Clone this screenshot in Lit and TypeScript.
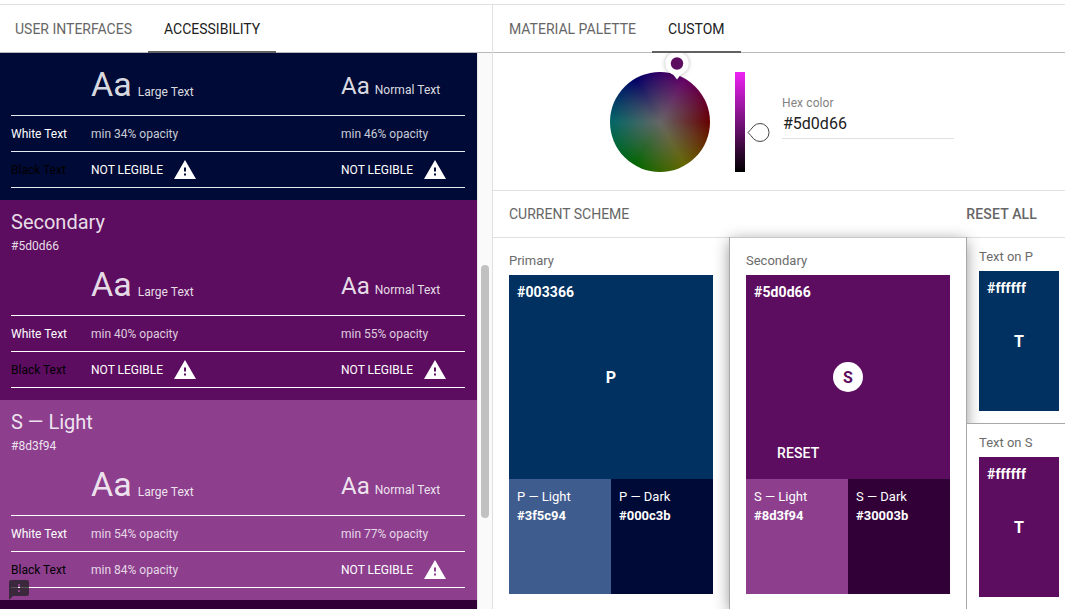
import { LitElement, html, css, svg, nothing } from "lit";
import { customElement, property } from "lit/decorators.js";

interface Report {
  name: string;
  hex: string;
  bg: string;
  white: [string, string];
  black: [string, string];
  clipped?: boolean;
}

const REPORTS: Report[] = [
  { name: "", hex: "", bg: "#000a36", white: ["34", "46"], black: ["", ""], clipped: true },
  { name: "Secondary", hex: "#5d0d66", bg: "#5d0d60", white: ["40", "55"], black: ["", ""] },
  { name: "S — Light", hex: "#8d3f94", bg: "#8d3f8e", white: ["54", "77"], black: ["84", ""] },
];

const warning = svg`<svg class="warn" width="22" height="19" viewBox="0 0 22 19">
  <path fill="#fff" fill-rule="evenodd" d="M11 0 22 19H0ZM10 7.6v4h2v-4ZM10 13.6v2h2v-2Z"/></svg>`;

@customElement("contrast-report")
class ContrastReport extends LitElement {
  @property({ attribute: false }) report!: Report;

  static styles = css`
    :host { display: block; flex: none; }
    .box { height: 200px; box-sizing: border-box; padding: 0 12px 0 11px; color: rgba(255, 255, 255, 0.87); font-size: 12px; }
    .clipped { height: 147px; }
    .head { height: 62px; box-sizing: border-box; padding-top: 10px; }
    .clipped .head { height: 9px; padding: 0; }
    .name { font-size: 20px; line-height: 24px; }
    .hex { line-height: 14px; margin-top: 5px; }
    .row { display: grid; grid-template-columns: 80px 250px 1fr; height: 35px; align-items: center; border-bottom: 1px solid #fff; color: rgba(255, 255, 255, 0.8); }
    .clipped .row { border-color: #e8eaf2; }
    .samples { height: 53px; align-items: start; color: rgba(255, 255, 255, 0.87); }
    .samples .label { margin-left: 6px; letter-spacing: 0.05px; }
    .large, .normal { display: flex; align-items: baseline; }
    .big { font-size: 34px; line-height: 45px; }
    .mid { font-size: 24px; line-height: 28px; }
    .normal { padding-top: 10px; }
    .normal .label { margin-left: 5px; }
    .white { color: #fff; }
    .black { color: #000; }
    .fail { display: flex; align-items: center; color: #fff; }
    .warn { margin-left: 11px; }
  `;

  private cell(value: string) {
    return value ? html`<span>min ${value}% opacity</span>` : html`<span class="fail">NOT LEGIBLE ${warning}</span>`;
  }

  render() {
    const r = this.report;
    return html`<div class="box ${r.clipped ? "clipped" : ""}" style="background:${r.bg}">
      <div class="head">${r.name ? html`<div class="name">${r.name}</div><div class="hex">${r.hex}</div>` : nothing}</div>
      <div class="row samples">
        <span></span>
        <span class="large"><span class="big">Aa</span><span class="label">Large Text</span></span>
        <span class="normal"><span class="mid">Aa</span><span class="label">Normal Text</span></span>
      </div>
      <div class="row"><span class="white">White Text</span>${this.cell(r.white[0])}${this.cell(r.white[1])}</div>
      <div class="row"><span class="black">Black Text</span>${this.cell(r.black[0])}${this.cell(r.black[1])}</div>
    </div>`;
  }
}

@customElement("color-picker")
class ColorPicker extends LitElement {
  static styles = css`
    :host { display: block; height: 137px; border-bottom: 1px solid #e0e0e0; overflow: hidden; }
    .picker { display: flex; padding: 19px 0 0 117px; }
    .wheel { position: relative; width: 100px; height: 100px; border-radius: 50%;
      background: radial-gradient(circle closest-side, #666, rgba(102, 102, 102, 0)), conic-gradient(from 90deg, #600, #660, #060, #066, #006, #606, #600); }
    .pin { position: absolute; left: 50px; top: -25px; filter: drop-shadow(0 0 2px rgba(0, 0, 0, 0.28)); }
    .value { position: relative; width: 10px; height: 100px; margin-left: 25px; background: linear-gradient(#ee22f5, #000); }
    .handle { position: absolute; left: 12px; top: 50px; }
    .field { margin: 23px 0 0 37px; width: 172px; height: 43px; border-bottom: 1px solid #e0e0e0; }
    .label { font-size: 12px; line-height: 16px; letter-spacing: 0.1px; color: #828282; }
    .hex { font-size: 16px; line-height: 20px; padding: 3px 0 0 1px; color: #212121; }
  `;

  render() {
    return html`<div class="picker">
      <div class="wheel">
        <svg class="pin" width="34" height="36" viewBox="0 0 34 36">
          <path fill="#fff" d="M17 32.5 13.5 28C8.5 25.4 5.2 21.5 5.2 16.5a11.8 11.8 0 0 1 23.6 0c0 5-3.300 8.900-8.300 11.500Z"/>
          <circle cx="17" cy="16.500" r="6.200" fill="#5d0d60"/>
        </svg>
      </div>
      <div class="value">
        <svg class="handle" width="24" height="22" viewBox="0 0 24 22">
          <path fill="#fff" stroke="#444" d="M1 10.500C3 8.500 4.800 6.300 6.600 4.200A9 9 0 1 1 6.600 16.800C4.800 14.700 3 12.500 1 10.500Z"/>
        </svg>
      </div>
      <div class="field"><div class="label">Hex color</div><div class="hex">#5d0d66</div></div>
    </div>`;
  }
}

@customElement("scheme-card")
class SchemeCard extends LitElement {
  @property() label = "";
  @property() letter = "";
  @property() hex = "";
  @property() main = "";
  @property() lightHex = "";
  @property() light = "";
  @property() darkHex = "";
  @property() dark = "";
  @property({ type: Boolean }) active = false;

  static styles = css`
    :host { display: block; padding: 14px 16px; color: #fff; }
    .label { font-size: 13px; line-height: 18px; height: 23px; color: #6b6b6b; }
    .main { height: 204px; display: grid; grid-template-rows: 87px 30px 87px; justify-items: center; }
    .hex { justify-self: start; font-size: 14px; font-weight: 700; line-height: 18px; padding: 8px; letter-spacing: 0.1px; }
    .letter { width: 30px; line-height: 31px; height: 30px; border-radius: 50%; text-align: center; font-size: 16px; font-weight: 700; }
    .active { background: #fff; color: #5d0d60; }
    .reset { justify-self: start; margin: 52px 0 0 31px; font-size: 14px; line-height: 18px; font-weight: 500; letter-spacing: 0.1px; }
    .pair { display: grid; grid-template-columns: 1fr 1fr; height: 115px; }
    .half { padding: 9px 8px; font-size: 13px; line-height: 18px; }
    .half b { display: block; margin-top: 1px; }
  `;

  render() {
    return html`<div class="label">${this.label}</div>
      <div class="main" style="background:${this.main}">
        <span class="hex">${this.hex}</span>
        <span class="letter ${this.active ? "active" : ""}">${this.letter}</span>
        ${this.active ? html`<span class="reset">RESET</span>` : nothing}
      </div>
      <div class="pair">
        <div class="half" style="background:${this.light}">${this.letter} — Light<b>${this.lightHex}</b></div>
        <div class="half" style="background:${this.dark}">${this.letter} — Dark<b>${this.darkHex}</b></div>
      </div>`;
  }
}

@customElement("app-root")
class AppRoot extends LitElement {
  static styles = css`
    :host { display: block; width: 1065px; height: 609px; overflow: hidden; background: #fff; font-family: Roboto, "Liberation Sans", sans-serif; }
    .page { display: grid; grid-template-columns: 492px 1fr; height: 604px; margin-top: 4px; border-top: 1px solid #e0e0e0; }
    .left { display: flex; flex-direction: column; min-height: 0; height: 604px; }
    .right { border-left: 1px solid #e0e0e0; height: 604px; overflow: hidden; }
    .tabs { display: flex; height: 47px; flex: none; border-bottom: 1px solid #bababa; font-size: 14px; color: #666; }
    .tab { line-height: 49px; height: 46px; padding: 0 16px; border-bottom: 2px solid transparent; white-space: nowrap; }
    .left .tab:first-child { padding-left: 15px; }
    .on { color: #212121; border-color: #616161; }
    .scroller { display: flex; flex: 1; min-height: 0; background: #fafafa; }
    .reports { width: 477px; display: flex; flex-direction: column; overflow: hidden; }
    .next { flex: 1; background: #300036; }
    .track { flex: 1; border-left: 1px solid #e8e8e8; padding: 212px 0 0 3px; }
    .thumb { width: 8px; height: 253px; border-radius: 4px; background: #c1c1c1; }
    .feedback { position: absolute; left: 9px; top: 580px; }
    .bar { display: flex; justify-content: space-between; height: 46px; line-height: 47px; padding: 0 28px 0 16px; border-bottom: 1px solid #e0e0e0; font-size: 14px; color: #666; }
    .bar b { font-weight: 500; letter-spacing: 0.15px; }
    .cards { display: grid; grid-template-columns: 236px 236px 1fr; column-gap: 1px; height: 371px; }
    .selected { position: relative; background: #fff; box-shadow: 0 0 0 1px #a8a8a8, 0 3px 15px rgba(0, 0, 0, 0.45); clip-path: inset(-14px -20px 0 -20px); }
    .selected::before { content: ""; position: absolute; left: 0; right: 0; top: -1px; height: 1px; background: #c8c8c8; }
    .side { display: grid; grid-template-rows: 185px 1fr; row-gap: 1px; }
    .text { padding: 10px 6px 0 12px; }
    .over { position: relative; background: #fff; box-shadow: 0 0 0 1px #a8a8a8; }
    .label { height: 23px; line-height: 18px; font-size: 13px; color: #6b6b6b; }
    .sample { height: 140px; display: grid; grid-template-rows: 55px 30px; color: #fff; background: #003160; }
    .over .sample { background: #5d0d60; }
    .hex { padding: 8px; font-size: 14px; line-height: 18px; font-weight: 700; letter-spacing: 0.1px; }
    .t { font-size: 16px; line-height: 31px; font-weight: 700; text-align: center; }
  `;

  render() {
    return html`<div class="page">
        <div class="left">
          <div class="tabs"><span class="tab">USER INTERFACES</span><span class="tab on">ACCESSIBILITY</span></div>
          <div class="scroller">
            <div class="reports">
              ${REPORTS.map((r) => html`<contrast-report .report=${r}></contrast-report>`)}
              <div class="next"></div>
            </div>
            <div class="track"><div class="thumb"></div></div>
          </div>
        </div>
        <div class="right">
          <div class="tabs"><span class="tab">MATERIAL PALETTE</span><span class="tab on">CUSTOM</span></div>
          <color-picker></color-picker>
          <div class="bar"><span>CURRENT SCHEME</span><b>RESET ALL</b></div>
          <div class="cards">
            <scheme-card label="Primary" letter="P" hex="#003366" main="#003160" lightHex="#3f5c94" light="#3f5c8e" darkHex="#000c3b" dark="#000a36"></scheme-card>
            <scheme-card class="selected" active label="Secondary" letter="S" hex="#5d0d66" main="#5d0d60" lightHex="#8d3f94" light="#8d3f8e" darkHex="#30003b" dark="#300036"></scheme-card>
            <div class="side">
              <div class="text"><div class="label">Text on P</div><div class="sample"><span class="hex">#ffffff</span><span class="t">T</span></div></div>
              <div class="text over"><div class="label">Text on S</div><div class="sample"><span class="hex">#ffffff</span><span class="t">T</span></div></div>
            </div>
          </div>
        </div>
      </div>
      <svg class="feedback" width="20" height="20" viewBox="0 0 20 20">
        <path fill="#222" fill-opacity=".75" fill-rule="evenodd" d="M2 0H18Q20 0 20 2V14Q20 16 18 16H4L0 20V2Q0 0 2 0ZM9 4v4h2V4ZM9 10v2h2v-2Z"/>
      </svg>`;
  }
}
